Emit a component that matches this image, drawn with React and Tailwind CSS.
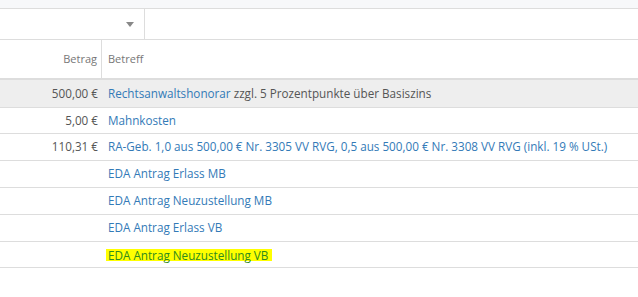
import React from "react";

const rows = [
  {
    betrag: "500,00 €",
    h: "h-[28px] bg-[#eeeeee]",
    text: (
      <span>
        <span className="text-[#337ab7]">Rechtsanwaltshonorar</span> zzgl. 5 Prozentpunkte über Basiszins
      </span>
    ),
  },
  { betrag: "5,00 €", h: "h-[26px]", text: <span className="text-[#337ab7]">Mahnkosten</span> },
  {
    betrag: "110,31 €",
    h: "h-[27px]",
    text: (
      <span className="text-[#337ab7]">
        RA-Geb. 1,0 aus 500,00 € Nr. 3305 VV RVG, 0,5 aus 500,00 € Nr. 3308 VV RVG (inkl. 19 % USt.)
      </span>
    ),
  },
  { betrag: "", h: "h-[27px]", text: <span className="text-[#337ab7]">EDA Antrag Erlass MB</span> },
  { betrag: "", h: "h-[27px]", text: <span className="text-[#337ab7]">EDA Antrag Neuzustellung MB</span> },
  { betrag: "", h: "h-[27px]", text: <span className="text-[#337ab7]">EDA Antrag Erlass VB</span> },
  {
    betrag: "",
    h: "h-[26px]",
    text: (
      <span className="inline-block leading-[12px] bg-[#ffff00] text-[#2e8a1e] pl-[2px] pr-[4px] -ml-[2px]">
        EDA Antrag Neuzustellung VB
      </span>
    ),
  },
];

export default function App() {
  return (
    <div
      className="w-[638px] h-[297px] bg-white overflow-hidden text-[11.7px] text-[#555]"
      style={{ fontFamily: '"Open Sans", sans-serif' }}
    >
      <div className="h-[9px] bg-[#f7f8fa] border-b border-[#dddddd]" />
      <div className="flex h-[31px] border-b border-[#dddddd]">
        <div className="w-[145px] border-r border-[#dddddd] flex items-center justify-end pr-[10px]">
          <svg width="8" height="5" viewBox="0 0 8 5">
            <path d="M0 0h8L4 5z" fill="#888" />
          </svg>
        </div>
        <div className="flex-1" />
      </div>
      <div className="flex h-[40px] border-b-2 border-[#dddddd] text-[11px] text-[#777]">
        <div className="w-[102px] border-r border-[#dddddd] flex items-center justify-end pr-[4px]">
          Betrag
        </div>
        <div className="flex-1 flex items-center pl-[6px]">Betreff</div>
      </div>
      {rows.map((r, i) => (
        <div key={i} className={`flex border-b border-[#dddddd] ${r.h}`}>
          <div className="w-[102px] flex items-center justify-end pr-[4px] whitespace-nowrap">
            {r.betrag}
          </div>
          <div className="flex-1 flex items-center pl-[6px] whitespace-nowrap">{r.text}</div>
        </div>
      ))}
    </div>
  );
}
